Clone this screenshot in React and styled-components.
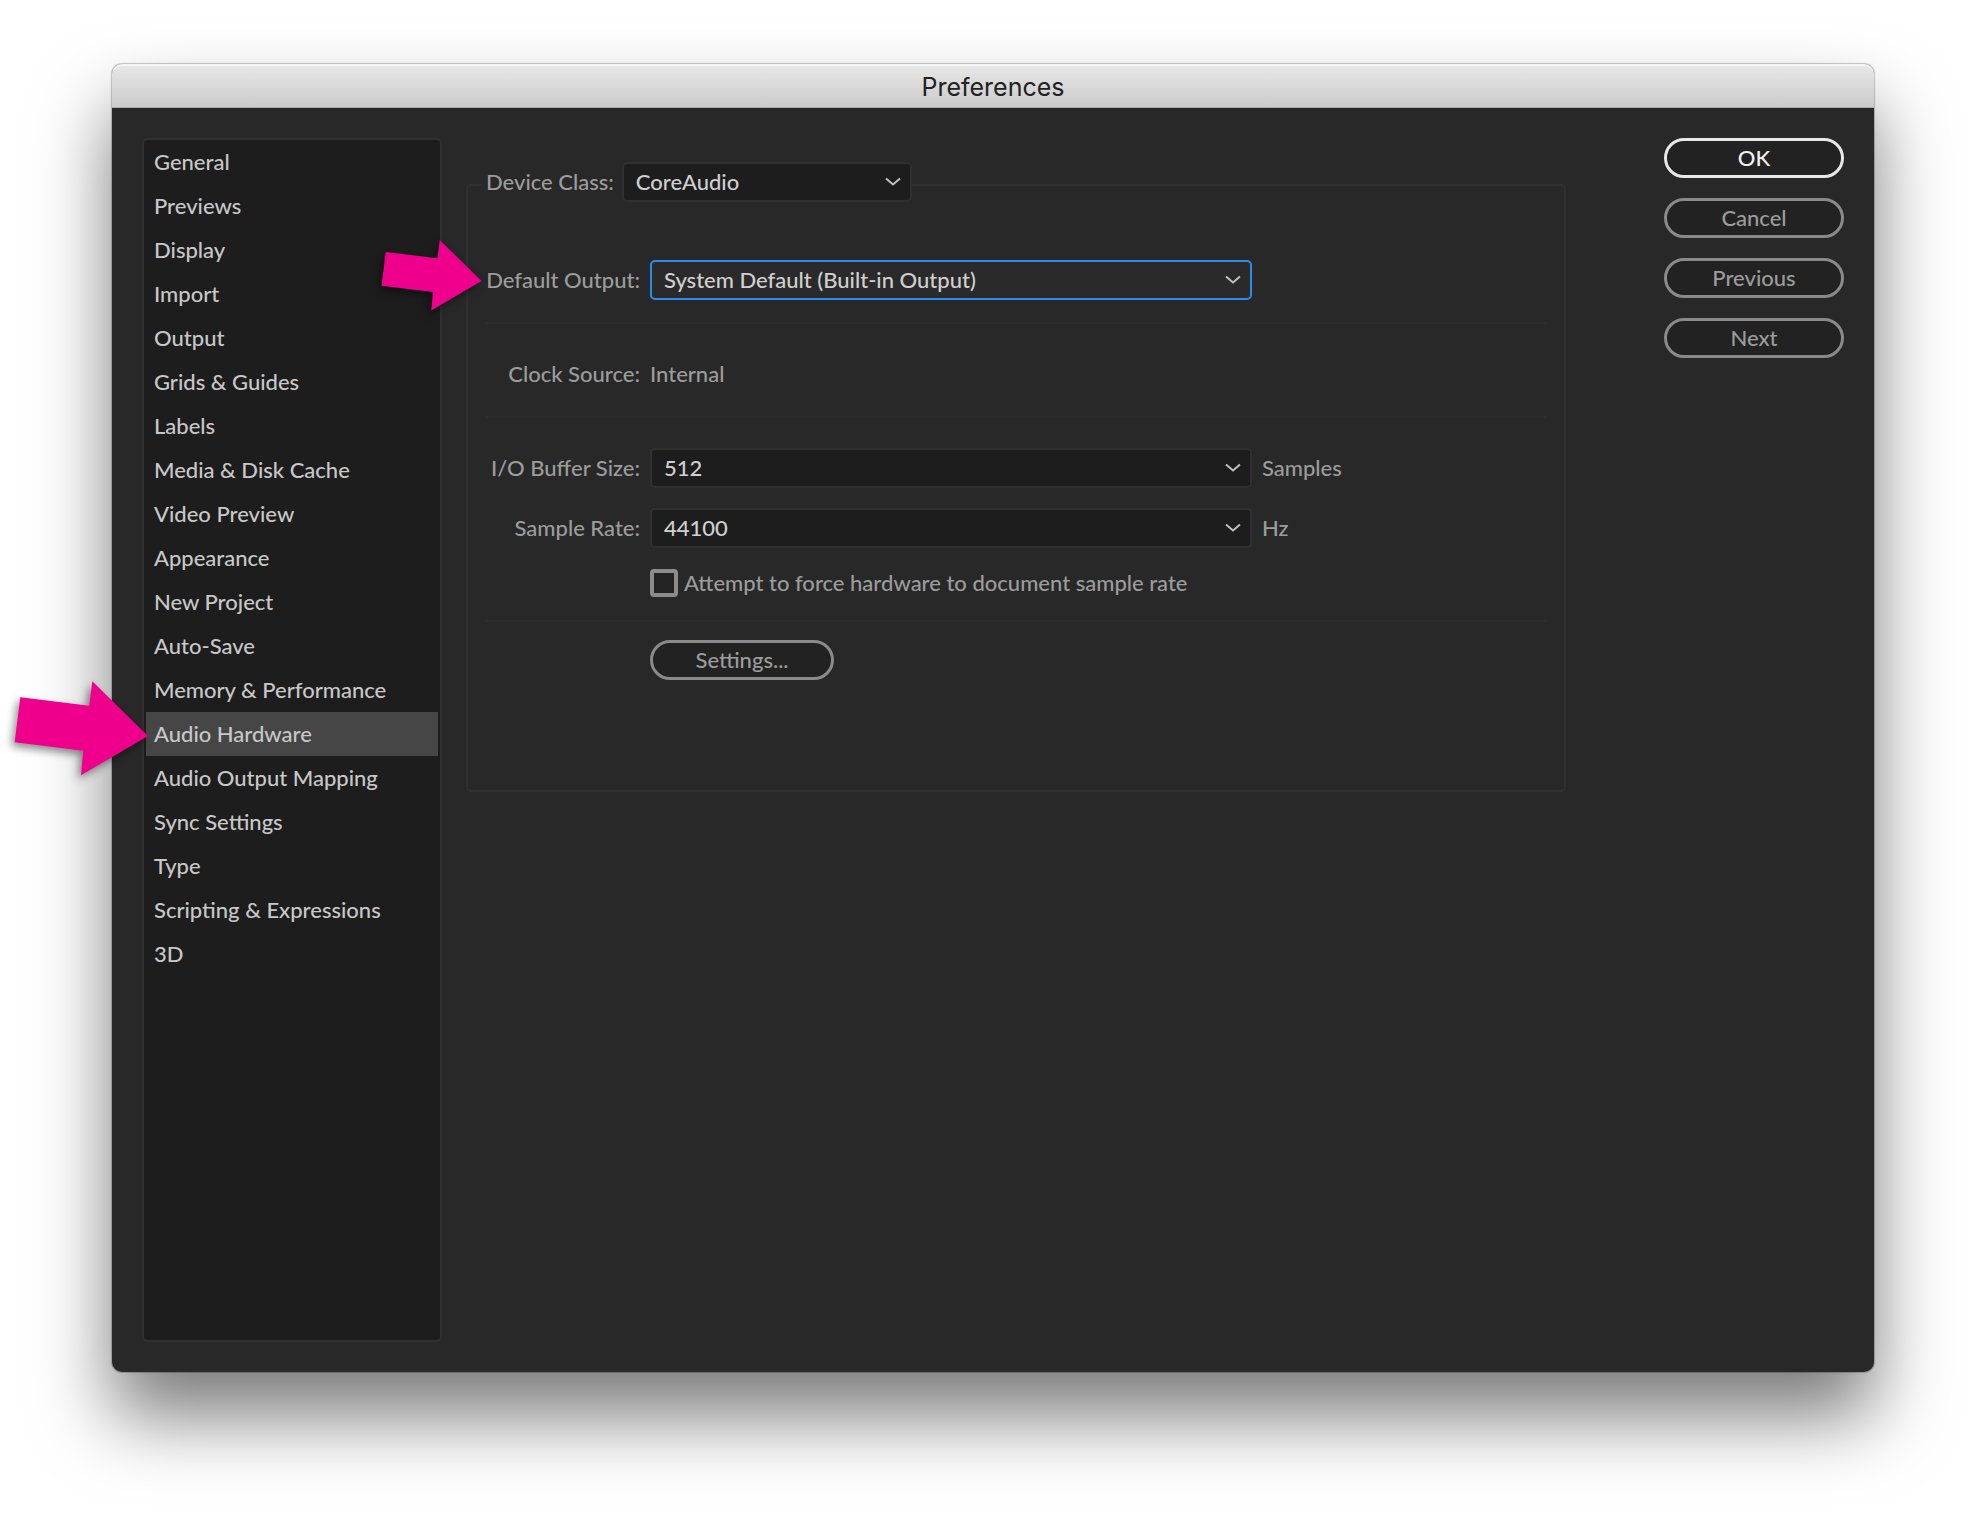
import React, { useState } from 'react'
import styled, { createGlobalStyle, css } from 'styled-components'

const sections = [
  'General',
  'Previews',
  'Display',
  'Import',
  'Output',
  'Grids & Guides',
  'Labels',
  'Media & Disk Cache',
  'Video Preview',
  'Appearance',
  'New Project',
  'Auto-Save',
  'Memory & Performance',
  'Audio Hardware',
  'Audio Output Mapping',
  'Sync Settings',
  'Type',
  'Scripting & Expressions',
  '3D'
]

const App = () => {
  const [current, setCurrent] = useState('Audio Hardware')

  return (
    <Page>
      <GlobalStyle />
      <Window>
        <TitleBar>Preferences</TitleBar>
        <Content>
          <Sidebar>
            {sections.map(name => (
              <Item key={name}>
                <ItemButton
                  type="button"
                  $active={name === current}
                  onClick={() => setCurrent(name)}
                >
                  {name}
                </ItemButton>
                {name === 'Audio Hardware' && <Arrow $place="item" />}
              </Item>
            ))}
          </Sidebar>
          <AudioHardware />
          <Actions>
            <Button type="button" $primary>
              OK
            </Button>
            <Button type="button">Cancel</Button>
            <Button type="button">Previous</Button>
            <Button type="button">Next</Button>
          </Actions>
        </Content>
      </Window>
    </Page>
  )
}

const AudioHardware = () => (
  <Panel>
    <Legend>
      <label htmlFor="device-class">Device Class:</label>
      <Dropdown id="device-class" value="CoreAudio" $small />
    </Legend>
    <Section>
      <Row>
        <Arrow $place="row" />
        <Label htmlFor="default-output">Default Output:</Label>
        <Dropdown
          id="default-output"
          value="System Default (Built-in Output)"
          $focused
        />
      </Row>
    </Section>
    <Section>
      <Row>
        <Label as="span">Clock Source:</Label>
        <span>Internal</span>
      </Row>
    </Section>
    <Section>
      <Row>
        <Label htmlFor="buffer-size">I/O Buffer Size:</Label>
        <Dropdown id="buffer-size" value="512" />
        <span>Samples</span>
      </Row>
      <Row>
        <Label htmlFor="sample-rate">Sample Rate:</Label>
        <Dropdown id="sample-rate" value="44100" />
        <span>Hz</span>
      </Row>
      <CheckRow>
        <Checkbox id="force-rate" type="checkbox" />
        <label htmlFor="force-rate">
          Attempt to force hardware to document sample rate
        </label>
      </CheckRow>
    </Section>
    <Section>
      <SettingsButton type="button">Settings...</SettingsButton>
    </Section>
  </Panel>
)

const Dropdown = ({ id, value, $small, $focused }) => (
  <Field $small={$small}>
    <Select id={id} defaultValue={value} $focused={$focused}>
      <option>{value}</option>
    </Select>
    <Chevron viewBox="0 0 16 10" aria-hidden="true">
      <path d="M1 1.5 L8 7.5 L15 1.5" />
    </Chevron>
  </Field>
)

const Arrow = ({ $place }) => (
  <ArrowSvg $place={$place} viewBox="0 0 136 96" aria-hidden="true">
    <path d="M134 56 L78.3 1.3 L75.3 25.7 L6.3 17.3 L0.7 62.3 L69.3 70.7 L67 95.3 Z" />
  </ArrowSvg>
)

const GlobalStyle = createGlobalStyle`
  * {
    box-sizing: border-box;
  }

  body {
    margin: 0;
    background: #ffffff;
    font-family: Lato, 'Liberation Sans', sans-serif;
    font-size: 22px;
    font-weight: 500;
    line-height: 28px;
    color: #9c9c9c;
  }

  button,
  select {
    font: inherit;
    color: inherit;
  }
`

const Page = styled.div`
  display: flex;
  min-height: 100vh;
  padding: 64px 112px 160px;
`

const Window = styled.main`
  display: flex;
  flex: 1;
  flex-direction: column;
  border-radius: 10px;
  background: #282828;
  box-shadow: 0 0 1px 1px rgba(0, 0, 0, 0.22),
    0 44px 76px rgba(0, 0, 0, 0.52);
`

const TitleBar = styled.header`
  height: 44px;
  border-bottom: 1px solid #a8a8a8;
  border-radius: 10px 10px 0 0;
  background: linear-gradient(#e8e8e8, #cbcbcb);
  box-shadow: inset 0 2px 0 #f3f3f3;
  font-family: Inter, 'Liberation Sans', sans-serif;
  font-size: 25px;
  font-weight: 400;
  line-height: 46px;
  text-align: center;
  color: #222222;
`

const Content = styled.div`
  display: grid;
  flex: 1;
  grid-template-columns: 300px minmax(0, 1fr) 180px;
  padding: 30px;
`

const Sidebar = styled.ul`
  margin: 0;
  padding: 0 2px;
  border: 2px solid #303030;
  border-radius: 5px;
  background: #1d1d1d;
  list-style: none;
`

const Item = styled.li`
  position: relative;
`

const ItemButton = styled.button`
  display: block;
  width: 100%;
  height: 44px;
  padding: 0 8px;
  border: 0;
  background: ${props => (props.$active ? '#464646' : 'transparent')};
  text-align: left;
  color: #c8c8c8;
`

const Panel = styled.fieldset`
  align-self: start;
  min-width: 0;
  margin: 24px 98px 0 24px;
  padding: 0 14px 90px;
  border: 2px solid #303030;
  border-radius: 5px;
`

const Legend = styled.legend`
  display: flex;
  align-items: center;
  gap: 8px;
  margin-bottom: 52px;
  padding: 0 0 6px 4px;
`

const Section = styled.div`
  display: flex;
  flex-direction: column;
  gap: 20px;
  margin: 0 4px;
  padding: 30px 0 22px;
  border-bottom: 2px solid #2d2d2d;

  &:first-of-type {
    padding-top: 0;
  }

  &:last-of-type {
    padding: 18px 0 20px;
    border-bottom: 0;
  }
`

const Row = styled.div`
  position: relative;
  display: grid;
  grid-template-columns: 154px minmax(0, 602px) auto;
  align-items: center;
  justify-content: start;
  column-gap: 10px;
  min-height: 40px;
`

const Label = styled.label`
  text-align: right;
  white-space: nowrap;
`

const Field = styled.div`
  position: relative;
  width: ${props => (props.$small ? '290px' : '100%')};
`

const Select = styled.select`
  display: block;
  appearance: none;
  width: 100%;
  height: 40px;
  padding: 0 36px 0 12px;
  border: 2px solid ${props => (props.$focused ? '#2d8ceb' : '#303030')};
  border-radius: 5px;
  outline: 0;
  background: ${props => (props.$focused ? '#2a2a2a' : '#1d1d1d')};
  color: #d0d0d0;
`

const Chevron = styled.svg`
  position: absolute;
  top: 15px;
  right: 11px;
  width: 16px;
  height: 10px;
  fill: none;
  stroke: #c0c0c0;
  stroke-width: 2;
  pointer-events: none;
`

const CheckRow = styled.div`
  display: flex;
  align-items: center;
  gap: 6px;
  height: 30px;
  margin-left: 164px;
`

const Checkbox = styled.input`
  appearance: none;
  width: 28px;
  height: 28px;
  margin: 0;
  border: 4px solid #8c8c8c;
  border-radius: 4px;
  background: #232323;
`

const Actions = styled.div`
  display: flex;
  flex-direction: column;
  gap: 20px;
`

const Button = styled.button`
  height: 40px;
  padding: 0 12px;
  border: 3px solid ${props => (props.$primary ? '#e8e8e8' : '#8a8a8a')};
  border-radius: 20px;
  background: #222222;
  line-height: 34px;
  color: ${props => (props.$primary ? '#f0f0f0' : '#9c9c9c')};
`

const SettingsButton = styled(Button)`
  width: 184px;
  margin-left: 164px;
`

const arrowPlaces = {
  item: css`
    top: -32px;
    left: -132px;
    width: 136px;
    height: 96px;
  `,
  row: css`
    top: -21px;
    left: -105px;
    width: 102px;
    height: 72px;
  `
}

const ArrowSvg = styled.svg`
  position: absolute;
  ${props => arrowPlaces[props.$place]};
  overflow: visible;
  fill: #ee008c;
  filter: drop-shadow(-3px 4px 4px rgba(0, 0, 0, 0.45));
  pointer-events: none;
`

export default App
